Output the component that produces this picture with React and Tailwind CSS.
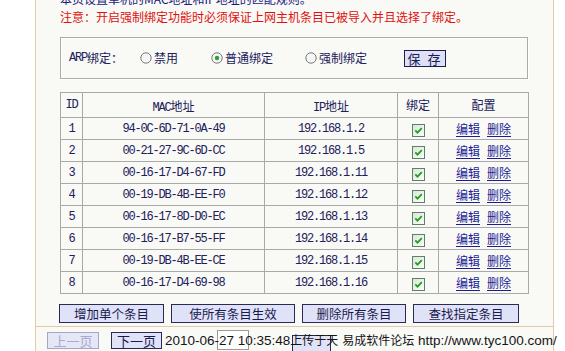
import React from "react";

const rows = [
  ["1", "94-0C-6D-71-0A-49", "192.168.1.2"],
  ["2", "00-21-27-9C-6D-CC", "192.168.1.5"],
  ["3", "00-16-17-D4-67-FD", "192.168.1.11"],
  ["4", "00-19-DB-4B-EE-F0", "192.168.1.12"],
  ["5", "00-16-17-8D-D0-EC", "192.168.1.13"],
  ["6", "00-16-17-B7-55-FF", "192.168.1.14"],
  ["7", "00-19-DB-4B-EE-CE", "192.168.1.15"],
  ["8", "00-16-17-D4-69-98", "192.168.1.16"],
];

function Radio({ checked }) {
  return (
    <svg width="12" height="12" viewBox="0 0 12 12" className="shrink-0">
      <circle cx="6" cy="6" r="5.2" fill="#f6f6f6" stroke="#7a7a7a" strokeWidth="1" />
      {checked && <circle cx="6" cy="6" r="2.2" fill="#2fa02f" />}
    </svg>
  );
}

function Check() {
  return (
    <svg width="13" height="13" viewBox="0 0 13 13" className="inline-block align-middle">
      <defs>
        <linearGradient id="cbg" x1="0" y1="0" x2="1" y2="1">
          <stop offset="0" stopColor="#dbe4d8" />
          <stop offset="1" stopColor="#fbfffb" />
        </linearGradient>
      </defs>
      <rect x="0.5" y="0.5" width="12" height="12" fill="url(#cbg)" stroke="#5e7e6e" />
      <path d="M3.3 6.4 L5.5 8.7 L9.8 4.1" fill="none" stroke="#22a022" strokeWidth="1.8" />
    </svg>
  );
}

const mono = "font-['Liberation_Mono','Noto_Sans_CJK_SC',monospace]";
const cjk = "font-['Noto_Sans_CJK_SC',sans-serif]";
const num = `${mono} text-[12px] tracking-[-1.2px]`;

export default function App() {
  return (
    <div className="relative w-[565px] h-[351px] overflow-hidden bg-white">
      <div className="ml-[35px] w-[519px] h-full border-x border-[#e3c9a6] bg-[#f9f9f6] flex flex-col">
        <div className="pl-[24px] flex-1">
          <div className={`${cjk} text-[12px] leading-[14px] mt-[-8px] text-[#1a1a80] whitespace-nowrap`}>
            本页设置单机的MAC地址和IP地址的匹配规则。
          </div>
          <div className={`${cjk} text-[12px] leading-[14px] mt-[4px] text-[#e01010] whitespace-nowrap`}>
            注意：开启强制绑定功能时必须保证上网主机条目已被导入并且选择了绑定。
          </div>

          <div className="mt-[13px] w-[468px] h-[42px] border border-[#ababab] shadow-[inset_1px_1px_0_#fff,1px_1px_0_#fff] flex items-center text-[#20205a]">
            <span className={`ml-[8px] ${num}`}>ARP</span>
            <span className={`${cjk} text-[12px]`}>绑定：</span>
            <span className="ml-[17px] flex items-center">
              <Radio />
              <span className={`ml-[2px] ${cjk} text-[12px]`}>禁用</span>
            </span>
            <span className="ml-[33px] flex items-center">
              <Radio checked />
              <span className={`ml-[2px] ${cjk} text-[12px]`}>普通绑定</span>
            </span>
            <span className="ml-[32px] flex items-center">
              <Radio />
              <span className={`ml-[2px] ${cjk} text-[12px]`}>强制绑定</span>
            </span>
            <button className={`ml-[37px] w-[42px] h-[17px] border border-[#1e1e4e] bg-[#dde0f7] ${cjk} text-[13px] leading-[15px] text-[#1a1a50] tracking-[2px]`}>
              保 存
            </button>
          </div>

          <table className="mt-[13px] w-[468px] border-collapse table-fixed text-[#20205a]">
            <colgroup>
              <col className="w-[22px]" />
              <col className="w-[182px]" />
              <col className="w-[133px]" />
              <col className="w-[41px]" />
              <col className="w-[90px]" />
            </colgroup>
            <thead>
              <tr className="h-[20px]">
                <th className={`border border-[#a9a9a9] font-normal ${num}`}>ID</th>
                <th className="border border-[#a9a9a9] font-normal">
                  <span className={num}>MAC</span>
                  <span className={`${cjk} text-[12px]`}>地址</span>
                </th>
                <th className="border border-[#a9a9a9] font-normal">
                  <span className={num}>IP</span>
                  <span className={`${cjk} text-[12px]`}>地址</span>
                </th>
                <th className={`border border-[#a9a9a9] font-normal ${cjk} text-[12px]`}>绑定</th>
                <th className={`border border-[#a9a9a9] font-normal ${cjk} text-[12px]`}>配置</th>
              </tr>
            </thead>
            <tbody>
              {rows.map(([id, mac, ip]) => (
                <tr key={id} className="h-[22px]">
                  <td className={`border border-[#a9a9a9] text-center ${num}`}>{id}</td>
                  <td className={`border border-[#a9a9a9] text-center ${num}`}>{mac}</td>
                  <td className={`border border-[#a9a9a9] text-center ${num}`}>{ip}</td>
                  <td className="border border-[#a9a9a9] text-center leading-none"><Check /></td>
                  <td className={`border border-[#a9a9a9] text-center ${cjk} text-[12px] text-[#1c1c96]`}>
                    <a className="underline underline-offset-2">编辑</a>
                    <a className="ml-[7px] underline underline-offset-2">删除</a>
                  </td>
                </tr>
              ))}
            </tbody>
          </table>

          <div className={`mt-[10px] ml-[-1px] flex gap-[7px] ${cjk} text-[12.5px] text-[#1a1a50]`}>
            <button className="w-[105px] h-[19px] border border-[#2a2a5a] bg-[#e0e2f8] leading-[17px]">增加单个条目</button>
            <button className="w-[124px] h-[19px] border border-[#2a2a5a] bg-[#e0e2f8] leading-[17px]">使所有条目生效</button>
            <button className="w-[104px] h-[19px] border border-[#2a2a5a] bg-[#e0e2f8] leading-[17px]">删除所有条目</button>
            <button className="w-[106px] h-[19px] border border-[#2a2a5a] bg-[#e0e2f8] leading-[17px]">查找指定条目</button>
          </div>
        </div>

        <div className={`h-[25px] border-t border-[#e3c9a6] flex items-start pl-[11px] pt-[5px] ${cjk} text-[13px]`}>
          <button className="w-[52px] h-[17px] border border-[#a4a6c8] bg-[#e6e7f6] text-[#a8aace] leading-[15px]">上一页</button>
          <button className="ml-[12px] w-[51px] h-[17px] border border-[#2a2a5a] bg-[#e0e2f8] text-[#1a1a50] leading-[15px]">下一页</button>
          <div className="ml-[55px] mt-[-2px] w-[32px] h-[20px] border border-[#9a9a9a] bg-white" />
          <div className="ml-[43px] mt-[3px] w-[39px] h-[17px] border border-[#2a2a5a] bg-[#e0e2f8]" />
        </div>
      </div>

      <div className="absolute left-[165px] top-[332px] whitespace-nowrap font-['Liberation_Sans','Noto_Sans_CJK_SC',sans-serif] text-[13.5px] leading-[16px] text-[#151515]">
        2010-06-27 10:35:48
        <span className={`${cjk} text-[12px]`}>上传于天</span>{" "}
        <span className={`${cjk} text-[12px]`}>易成软件论坛</span> http://www.tyc100.com/
      </div>
    </div>
  );
}
